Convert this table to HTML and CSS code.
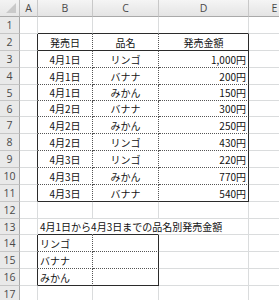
FILE: index.html
```html
<!DOCTYPE html>
<html lang="ja">
<head>
<meta charset="utf-8">
<title>Sheet</title>
<link rel="stylesheet" href="styles.css">
</head>
<body>
<div class="sheet">
  <div class="corner"><span class="tri"></span></div>
  <div class="ch">A</div><div class="ch">B</div><div class="ch">C</div><div class="ch">D</div><div class="ch">E</div>

  <div class="rh">1</div><div class="c"></div><div class="c bb-d"></div><div class="c bb-d"></div><div class="c bb-d"></div><div class="c"></div>

  <div class="rh">2</div><div class="c br-d"></div><div class="c ctr br-dot bb-d">発売日</div><div class="c ctr br-dot bb-d">品名</div><div class="c ctr br-d bb-d">発売金額</div><div class="c"></div>

  <div class="rh">3</div><div class="c br-d"></div><div class="c ctr br-dot bb-dot">4月1日</div><div class="c ctr br-dot bb-dot">リンゴ</div><div class="c num br-d bb-dot">1,000円</div><div class="c"></div>
  <div class="rh">4</div><div class="c br-d"></div><div class="c ctr br-dot bb-dot">4月1日</div><div class="c ctr br-dot bb-dot">バナナ</div><div class="c num br-d bb-dot">200円</div><div class="c"></div>
  <div class="rh">5</div><div class="c br-d"></div><div class="c ctr br-dot bb-dot">4月1日</div><div class="c ctr br-dot bb-dot">みかん</div><div class="c num br-d bb-dot">150円</div><div class="c"></div>
  <div class="rh">6</div><div class="c br-d"></div><div class="c ctr br-dot bb-dot">4月2日</div><div class="c ctr br-dot bb-dot">バナナ</div><div class="c num br-d bb-dot">300円</div><div class="c"></div>
  <div class="rh">7</div><div class="c br-d"></div><div class="c ctr br-dot bb-dot">4月2日</div><div class="c ctr br-dot bb-dot">みかん</div><div class="c num br-d bb-dot">250円</div><div class="c"></div>
  <div class="rh">8</div><div class="c br-d"></div><div class="c ctr br-dot bb-dot">4月2日</div><div class="c ctr br-dot bb-dot">リンゴ</div><div class="c num br-d bb-dot">430円</div><div class="c"></div>
  <div class="rh">9</div><div class="c br-d"></div><div class="c ctr br-dot bb-dot">4月3日</div><div class="c ctr br-dot bb-dot">リンゴ</div><div class="c num br-d bb-dot">220円</div><div class="c"></div>
  <div class="rh">10</div><div class="c br-d"></div><div class="c ctr br-dot bb-dot">4月3日</div><div class="c ctr br-dot bb-dot">みかん</div><div class="c num br-d bb-dot">770円</div><div class="c"></div>
  <div class="rh">11</div><div class="c br-d"></div><div class="c ctr br-dot bb-d">4月3日</div><div class="c ctr br-dot bb-d">バナナ</div><div class="c num br-d bb-d">540円</div><div class="c"></div>

  <div class="rh">12</div><div class="c"></div><div class="c"></div><div class="c"></div><div class="c"></div><div class="c"></div>

  <div class="rh">13</div><div class="c"></div><div class="c over bb-d">4月1日から4月3日までの品名別発売金額</div><div class="c br-none bb-d"></div><div class="c"></div><div class="c"></div>

  <div class="rh">14</div><div class="c br-d"></div><div class="c lft br-dot bb-dot">リンゴ</div><div class="c br-d bb-dot"></div><div class="c"></div><div class="c"></div>
  <div class="rh">15</div><div class="c br-d"></div><div class="c lft br-dot bb-dot">バナナ</div><div class="c br-d bb-dot"></div><div class="c"></div><div class="c"></div>
  <div class="rh">16</div><div class="c br-d"></div><div class="c lft br-dot bb-d">みかん</div><div class="c br-d bb-d"></div><div class="c"></div><div class="c"></div>

  <div class="rh">17</div><div class="c"></div><div class="c"></div><div class="c"></div><div class="c"></div><div class="c"></div>
</div>
</body>
</html>
```
FILE: styles.css
```css
html, body {
  margin: 0;
  padding: 0;
  background: #ffffff;
  overflow: hidden;
}

.sheet {
  display: grid;
  grid-template-columns: 20px 18px 55px 66px 90px 52px;
  grid-template-rows: 17px 17px 17px 17px 17px 16px 16px 17px 17px 17px 17px 17px 17px 16px 17px 17px 17px 17px;
  width: 300px;
  font-family: "Noto Sans CJK JP", "Noto Sans", sans-serif;
  font-size: 10px;
  color: #111;
}

.sheet > div {
  box-sizing: border-box;
  min-width: 0;
}

.corner {
  position: relative;
  background: linear-gradient(#f3f3f3, #e6e6e6);
  border-right: 1px solid #bcbcbc;
  border-bottom: 1px solid #a9a9a9;
}

.tri {
  position: absolute;
  right: 3px;
  bottom: 3px;
  width: 0;
  height: 0;
  border-left: 10px solid transparent;
  border-bottom: 10px solid #c9c9c9;
}

.ch {
  display: flex;
  align-items: center;
  justify-content: center;
  background: linear-gradient(#f5f5f5, #e4e4e4);
  border-right: 1px solid #c8c8c8;
  border-bottom: 1px solid #a9a9a9;
  font-family: "Open Sans", "Liberation Sans", sans-serif;
  font-size: 10.5px;
  color: #4a4a4a;
}

.rh {
  display: flex;
  align-items: center;
  justify-content: center;
  background: #e9e9e9;
  border-right: 1px solid #a9a9a9;
  border-bottom: 1px solid #c6c6c6;
  font-family: "Open Sans", "Liberation Sans", sans-serif;
  font-size: 10.5px;
  color: #4a4a4a;
}

.c {
  display: flex;
  align-items: center;
  border-right: 1px solid #dadcdd;
  border-bottom: 1px solid #dadcdd;
  white-space: nowrap;
}

.ctr { justify-content: center; }
.num { justify-content: flex-end; padding-right: 2px; }
.lft { justify-content: flex-start; padding-left: 2px; }

.over {
  padding-left: 2px;
  overflow: visible;
  border-right-color: transparent;
}

.br-none { border-right-color: transparent; }

.bb-d { border-bottom: 1px solid #2b2b2b; }
.bb-dot { border-bottom: 1px dotted #555; }
.br-d { border-right: 1px solid #2b2b2b; }
.br-dot { border-right: 1px dotted #555; }
```
